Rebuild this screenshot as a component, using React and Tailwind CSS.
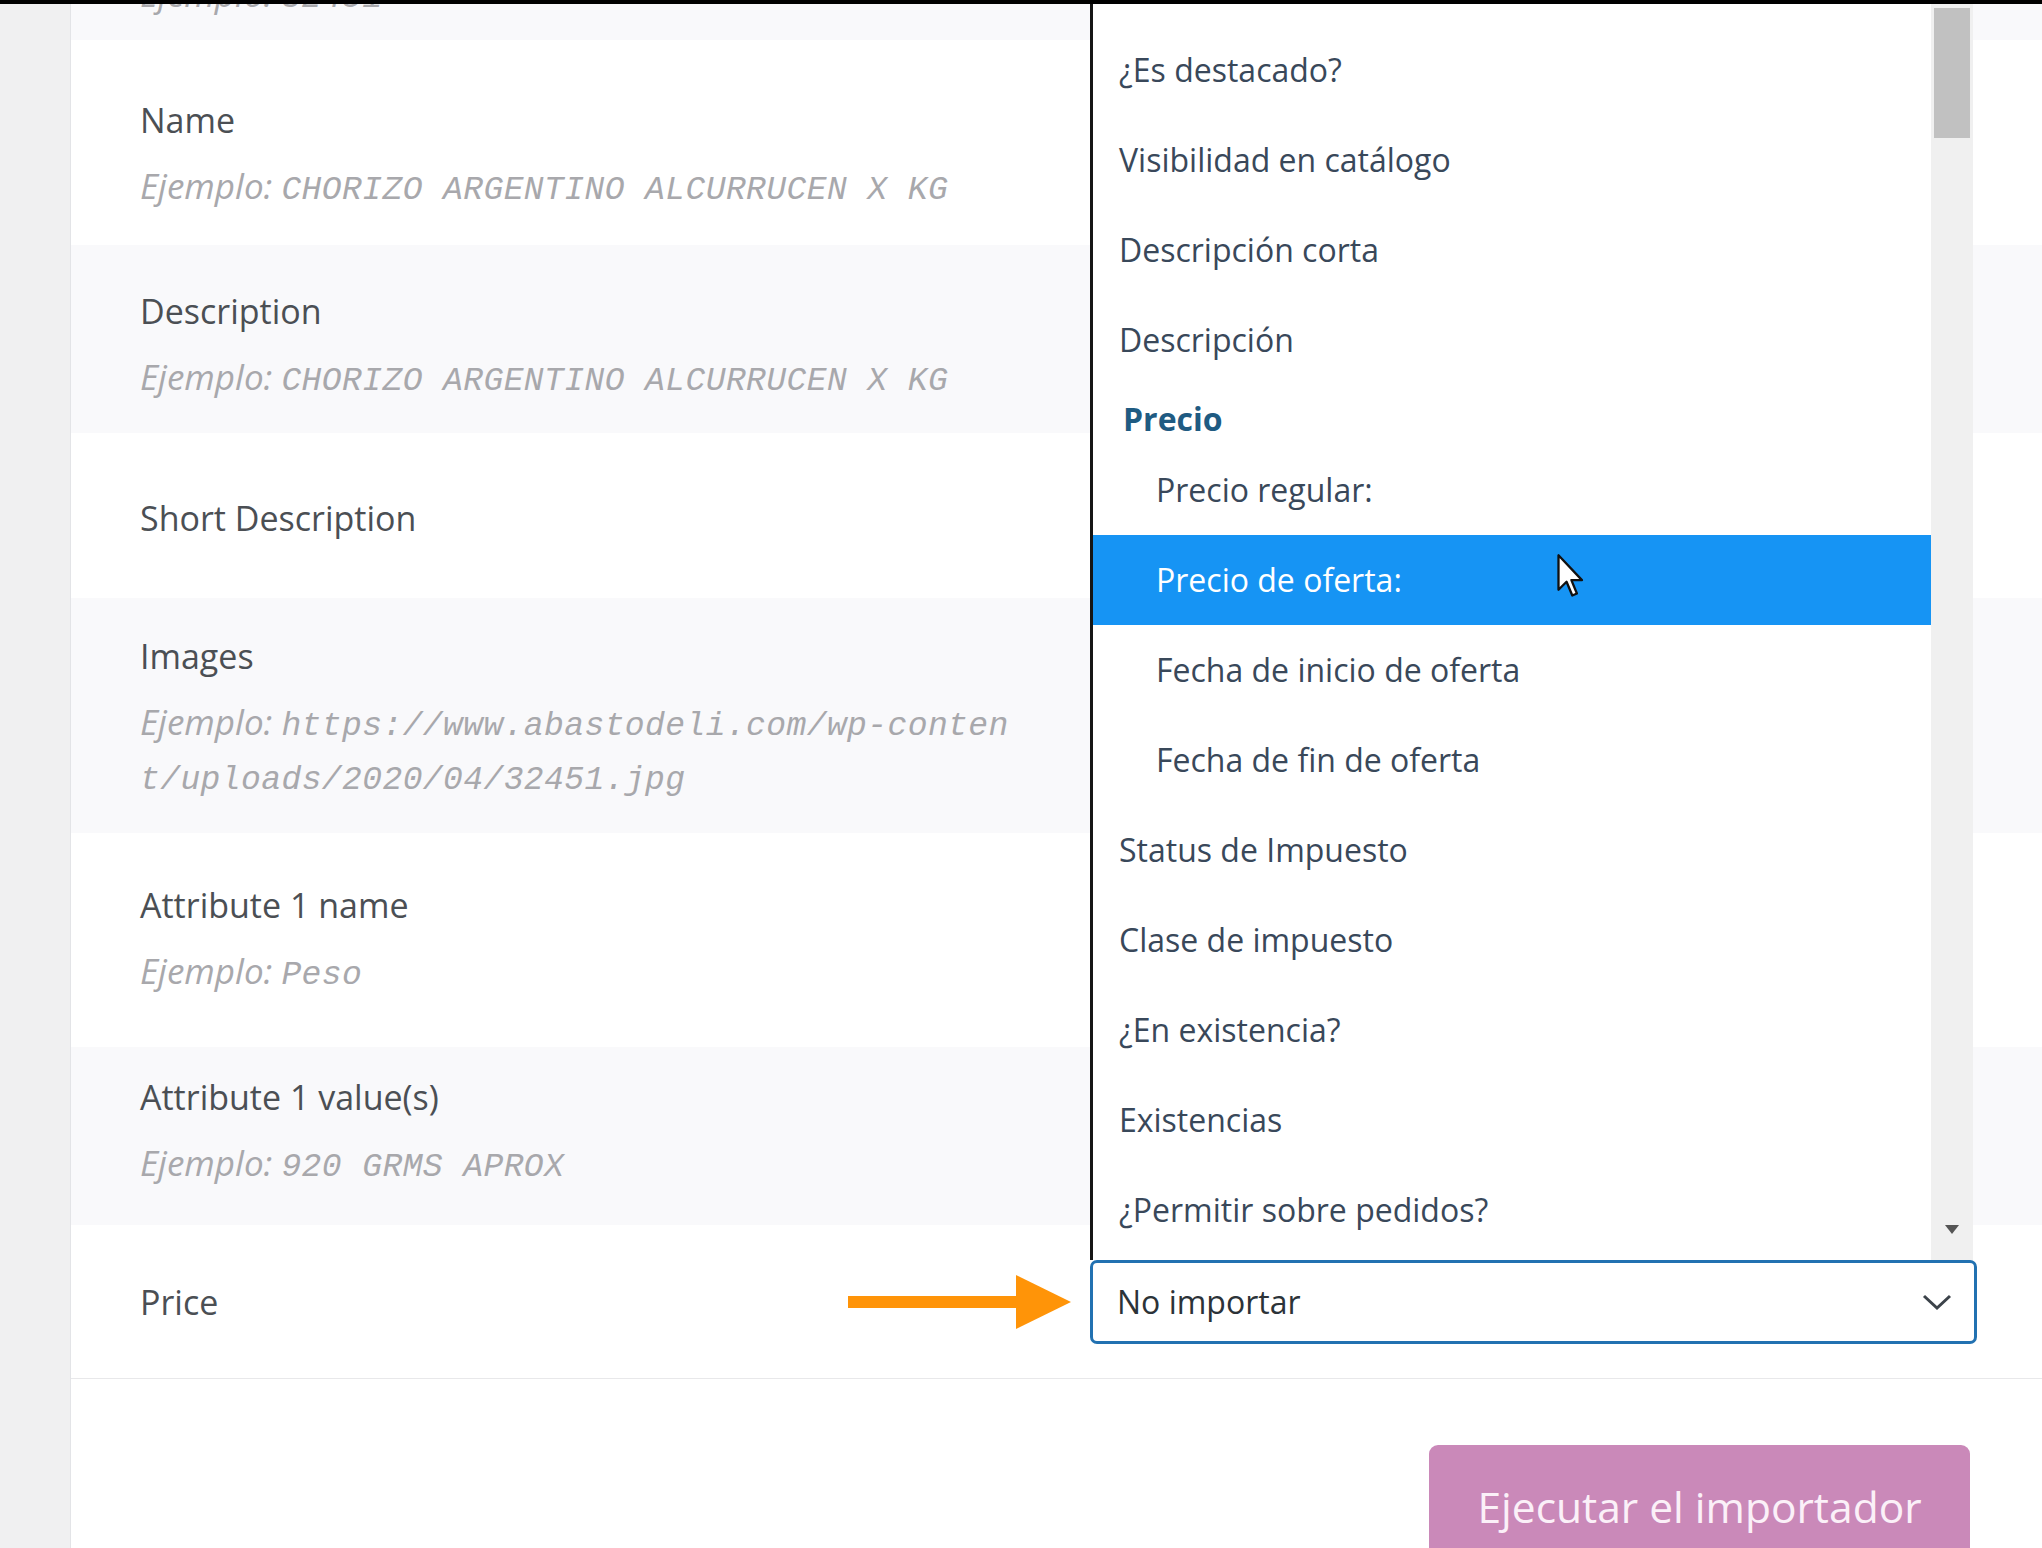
import React from "react";

const SANS = { fontFamily: "'Open Sans', 'Noto Sans', sans-serif" };
const MONO = { fontFamily: "'Liberation Mono', 'DejaVu Sans Mono', monospace" };

const rows = [
  { label: "Name", example: "CHORIZO ARGENTINO ALCURRUCEN X KG", h: "h-[205px]", pt: "pt-[58px]", bg: "bg-white" },
  { label: "Description", example: "CHORIZO ARGENTINO ALCURRUCEN X KG", h: "h-[188px]", pt: "pt-[44px]", bg: "bg-[#f9f9fb]" },
  { label: "Short Description", example: null, h: "h-[165px]", pt: "pt-[63px]", bg: "bg-white" },
  { label: "Images", example: ["https://www.abastodeli.com/wp-conten", "t/uploads/2020/04/32451.jpg"], h: "h-[235px]", pt: "pt-[36px]", bg: "bg-[#f9f9fb]" },
  { label: "Attribute 1 name", example: "Peso", h: "h-[214px]", pt: "pt-[50px]", bg: "bg-white" },
  { label: "Attribute 1 value(s)", example: "920 GRMS APROX", h: "h-[178px]", pt: "pt-[28px]", bg: "bg-[#f9f9fb]" },
];

const options = [
  { text: "¿Es destacado?" },
  { text: "Visibilidad en catálogo" },
  { text: "Descripción corta" },
  { text: "Descripción" },
  { group: "Precio" },
  { text: "Precio regular:", sub: true },
  { text: "Precio de oferta:", sub: true, active: true },
  { text: "Fecha de inicio de oferta", sub: true },
  { text: "Fecha de fin de oferta", sub: true },
  { text: "Status de Impuesto" },
  { text: "Clase de impuesto" },
  { text: "¿En existencia?" },
  { text: "Existencias" },
  { text: "¿Permitir sobre pedidos?" },
];

function Example({ value }) {
  const lines = Array.isArray(value) ? value : [value];
  return (
    <div className="mt-[14px] text-[#a8a8ac] italic">
      {lines.map((line, i) => (
        <div key={i} className="h-[59px] leading-[59px] whitespace-pre">
          {i === 0 && (
            <span style={SANS} className="text-[35px] leading-[59px] mr-[9px]">
              Ejemplo:
            </span>
          )}
          <span style={MONO} className="text-[33px] leading-[59px] tracking-[0.4px]">
            {line}
          </span>
        </div>
      ))}
    </div>
  );
}

function Row({ row }) {
  return (
    <div className={`flex shrink-0 ${row.h} ${row.bg}`}>
      <div className={`w-[1019px] pl-[69px] ${row.pt}`}>
        <div style={SANS} className="text-[34px] leading-[44px] text-[#4b4f54]">{row.label}</div>
        {row.example && <Example value={row.example} />}
      </div>
    </div>
  );
}

function Listbox() {
  return (
    <div className="absolute bottom-full left-0 w-[883px] h-[1260px] flex bg-white border-l-[3px] border-[#151515]">
      <div className="flex-1 flex flex-col pt-[25px]" style={SANS}>
        {options.map((o, i) =>
          o.group ? (
            <div key={i} className="h-[60px] pt-[12px] pl-[30px] text-[32px] leading-[44px] font-bold text-[#1f5b82]">
              {o.group}
            </div>
          ) : (
            <div
              key={i}
              className={`h-[90px] flex items-center text-[32px] ${o.sub ? "pl-[63px]" : "pl-[26px]"} ${
                o.active ? "bg-[#1694f4] text-white" : "text-[#39485a]"
              }`}
            >
              {o.text}
            </div>
          )
        )}
      </div>
      <div className="w-[42px] bg-[#f0f0f0] flex flex-col items-center">
        <div className="mt-[8px] w-[36px] h-[130px] bg-[#c1c1c1]" />
        <div className="flex-1" />
        <svg width="14" height="9" viewBox="0 0 14 9" className="mb-[26px]">
          <polygon points="0,0 14,0 7,9" fill="#555" />
        </svg>
      </div>
    </div>
  );
}

export default function App() {
  return (
    <div className="w-[2042px] h-[1548px] overflow-hidden bg-white flex flex-col relative">
      <div className="h-[4px] bg-black shrink-0 relative z-30" />
      <div className="flex flex-1 min-h-0">
        <div className="w-[71px] shrink-0 bg-[#f0f0f1] border-r border-[#e3e4e7]" />
        <div className="flex-1 flex flex-col">
          {/* partially scrolled row */}
          <div className="h-[36px] shrink-0 bg-[#f9f9fb] overflow-hidden pl-[69px]">
            <div className="-mt-[54px]">
              <Example value="32451" />
            </div>
          </div>

          {rows.map((r) => (
            <Row key={r.label} row={r} />
          ))}

          {/* Price row with open select */}
          <div className="h-[153px] shrink-0 flex items-center bg-white">
            <div className="w-[1019px] pl-[69px] flex items-center justify-between">
              <div style={SANS} className="text-[34px] leading-[44px] text-[#4b4f54]">Price</div>
              <svg width="223" height="54" viewBox="0 0 223 54" className="mr-[19px]">
                <rect x="0" y="21" width="172" height="12" fill="#ff9408" />
                <polygon points="168,0 223,27 168,54" fill="#ff9408" />
              </svg>
            </div>
            <div className="relative w-[887px]">
              <Listbox />
              <div
                style={SANS}
                className="h-[84px] border-[3px] border-[#2271b1] rounded-[7px] bg-white flex items-center justify-between pl-[24px] pr-[22px] text-[32px] text-[#2c3338]"
              >
                <span>No importar</span>
                <svg width="30" height="18" viewBox="0 0 30 18">
                  <polyline points="2,3 15,15 28,3" fill="none" stroke="#3c434a" strokeWidth="3" />
                </svg>
              </div>
            </div>
          </div>

          {/* footer */}
          <div className="flex-1 border-t border-[#e8e8ea] flex justify-end pr-[72px] pt-[66px]">
            <div
              style={SANS}
              className="w-[541px] h-[124px] rounded-t-[9px] bg-[#ca89b9] text-[#fbf0f8] text-[42.5px] flex justify-center pt-[35px] leading-[54px]"
            >
              Ejecutar el importador
            </div>
          </div>
        </div>
      </div>

      {/* mouse cursor */}
      <svg width="28" height="46" viewBox="0 0 12 20" className="absolute left-[1556px] top-[553px] z-40">
        <path d="M1 1 L1 16 L4.5 12.5 L7 18.5 L9 17.6 L6.6 11.8 L11.2 11.8 Z" fill="#fff" stroke="#111" strokeWidth="1" strokeLinejoin="round" />
      </svg>
    </div>
  );
}
